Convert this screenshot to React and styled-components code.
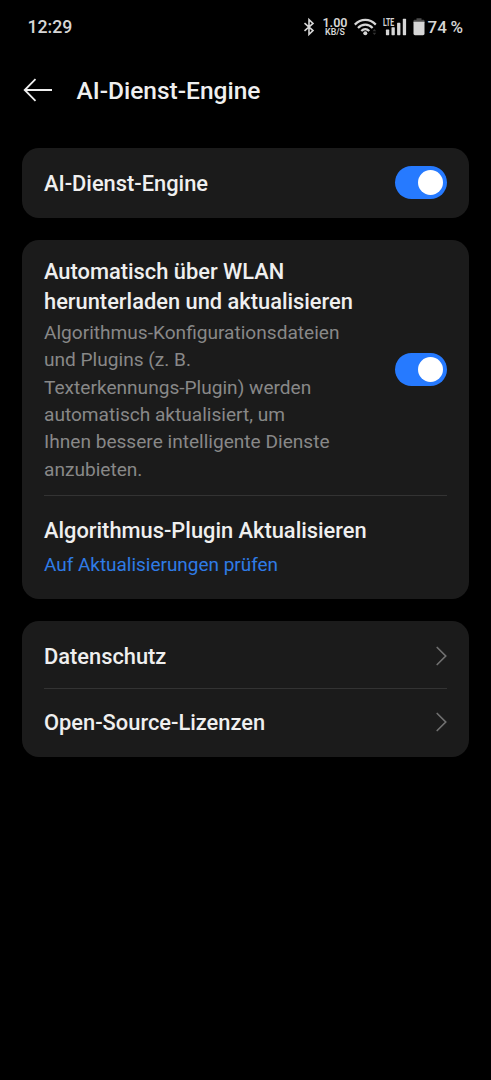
import React, { useState } from "react";
import styled, { createGlobalStyle } from "styled-components";

const GlobalStyle = createGlobalStyle`
  * {
    box-sizing: border-box;
  }

  body {
    margin: 0;
    background-color: #000;
    color: #efefef;
    font-family: Roboto, sans-serif;
  }
`;

const Screen = styled.div`
  min-height: 1080px;
  background-color: #000;
`;

const StatusBar = styled.div`
  display: flex;
  align-items: center;
  justify-content: space-between;
  height: 54px;
  padding: 0 28px 0 27.5px;
  color: #d6d6d6;
`;

const Clock = styled.span`
  font-size: 17.7px;
  font-weight: 500;
  line-height: 20px;
`;

const BatteryLevel = styled.span`
  width: 35.5px;
  font-size: 17px;
  font-weight: 500;
  line-height: 20px;
  word-spacing: -0.6px;
  white-space: nowrap;
`;

const StatusIcons = styled.div`
  display: flex;
  align-items: center;

  svg {
    display: block;
    flex: none;
    overflow: visible;
  }
`;

const Speed = styled.div`
  display: flex;
  flex-direction: column;
  align-items: center;
  width: 26px;
  font-size: 12.6px;
  font-weight: 600;
  line-height: 10px;
`;

const SpeedUnit = styled.span`
  font-size: 8.8px;
  line-height: 8px;
`;

const IconSlot = styled.span`
  margin-right: ${(props) => props.$gap};
`;

const Header = styled.header`
  display: flex;
  align-items: center;
  gap: 23.5px;
  height: 72px;
  padding-left: 23px;
`;

const BackButton = styled.button`
  display: flex;
  padding: 0;
  border: 0;
  background: none;
  color: #efefef;
`;

const Title = styled.h1`
  margin: 0;
  padding-top: 2px;
  font-size: 24.5px;
  font-weight: 500;
  line-height: 32px;
`;

const Content = styled.main`
  display: flex;
  flex-direction: column;
  gap: 22px;
  padding: 21.5px 22px 0;
`;

const Card = styled.section`
  padding: 0 22px;
  border-radius: 17px;
  background-color: #1b1b1b;
`;

const Row = styled.div`
  display: flex;
  align-items: center;
  justify-content: space-between;
  height: ${(props) => props.$height};
  padding: ${(props) => props.$padding || "0"};
  border-top: ${(props) => (props.$divided ? "1px solid #333" : "0")};
`;

const Label = styled.div`
  padding-top: 2px;
  font-size: 21.85px;
  font-weight: 500;
  line-height: 30px;
  white-space: pre-line;
`;

const Description = styled.p`
  margin: 2px 0 0;
  color: #888;
  font-size: 19.1px;
  line-height: 27.3px;
  white-space: pre-line;
`;

const Link = styled.div`
  margin-top: 5px;
  color: #2f7be6;
  font-size: 18.95px;
  line-height: 27px;
`;

const Track = styled.button`
  display: flex;
  flex: none;
  align-items: center;
  justify-content: ${(props) => (props.$on ? "flex-end" : "flex-start")};
  width: 52px;
  height: 33px;
  padding: 0 4px;
  border: 0;
  border-radius: 17px;
  background-color: ${(props) => (props.$on ? "#267aff" : "#444")};
`;

const Thumb = styled.span`
  width: 25px;
  height: 25px;
  border-radius: 50%;
  background-color: #fff;
`;

const Toggle = ({ label }) => {
  const [on, setOn] = useState(true);
  return (
    <Track
      role="switch"
      aria-label={label}
      aria-checked={on}
      $on={on}
      onClick={() => setOn(!on)}
    >
      <Thumb />
    </Track>
  );
};

const BluetoothIcon = () => (
  <svg width="12" height="18" viewBox="0 0 12 18" fill="none">
    <path
      d="M1.5 5.2L10 12.6L6 16.4V1.6L10 5.4L1.5 12.8"
      stroke="#d6d6d6"
      strokeWidth="1.6"
    />
  </svg>
);

const WifiIcon = () => (
  <svg width="24" height="18" viewBox="0 0 24 18" fill="none">
    <g stroke="#d6d6d6" strokeWidth="2.2">
      <path d="M0.8 6.6C7 0.4 15.6 0.4 21.8 6.6" />
      <path d="M4 9.9C8.2 5.6 14.4 5.6 18.6 9.9" />
      <path d="M7.3 13C9.8 10.5 12.8 10.5 15.3 13" />
    </g>
    <circle cx="11.3" cy="15.3" r="2" fill="#d6d6d6" />
    <path d="M18.6 13.2L20.4 11L22.2 13.2ZM18.6 14.8L20.4 17L22.2 14.8Z" fill="#333" />
  </svg>
);

const SignalIcon = () => (
  <svg width="24" height="18" viewBox="0 0 24 18">
    <text
      x="0"
      y="7.8"
      fill="#d6d6d6"
      fontSize="10.4"
      fontWeight="700"
      textLength="11.2"
      lengthAdjust="spacingAndGlyphs"
    >
      LTE
    </text>
    <g fill="#d6d6d6">
      <rect x="2.9" y="11.6" width="3.3" height="5.6" rx="0.6" />
      <rect x="8.5" y="9.2" width="3.3" height="8" rx="0.6" />
      <rect x="14.1" y="4.8" width="3.3" height="12.4" rx="0.6" />
      <rect x="19.8" y="0.8" width="3.3" height="16.4" rx="0.6" />
    </g>
  </svg>
);

const BatteryIcon = () => (
  <svg width="12" height="18" viewBox="0 0 12 18">
    <path d="M3.5 0.2H8.5V1.7H10.5Q11.5 1.7 11.5 3V5H0.5V3Q0.5 1.7 1.5 1.7H3.5Z" fill="#4c4c4c" />
    <path d="M0.5 3.7H11.5V15.8Q11.5 17.2 10 17.2H2Q0.5 17.2 0.5 15.8Z" fill="#d6d6d6" />
  </svg>
);

const BackIcon = () => (
  <svg width="30" height="24" viewBox="0 0 30 24" fill="none">
    <path
      d="M12.5 1.2L1.7 12L12.5 22.8M1.7 12H29"
      stroke="currentColor"
      strokeWidth="1.8"
    />
  </svg>
);

const Chevron = () => (
  <svg width="12" height="20" viewBox="0 0 12 20" fill="none">
    <path
      d="M2.2 1.5L10.7 10L2.2 18.5"
      stroke="#707070"
      strokeWidth="1.7"
      strokeLinecap="round"
    />
  </svg>
);

const App = () => {
  return (
    <Screen>
      <GlobalStyle />
      <StatusBar>
        <Clock>12:29</Clock>
        <StatusIcons>
          <IconSlot $gap="7px">
            <BluetoothIcon />
          </IconSlot>
          <IconSlot $gap="5.5px">
            <Speed>
              <span>1.00</span>
              <SpeedUnit>KB/S</SpeedUnit>
            </Speed>
          </IconSlot>
          <IconSlot $gap="5.5px">
            <WifiIcon />
          </IconSlot>
          <IconSlot $gap="6px">
            <SignalIcon />
          </IconSlot>
          <IconSlot $gap="2.5px">
            <BatteryIcon />
          </IconSlot>
          <BatteryLevel>74 %</BatteryLevel>
        </StatusIcons>
      </StatusBar>
      <Header>
        <BackButton aria-label="Zurück">
          <BackIcon />
        </BackButton>
        <Title>AI-Dienst-Engine</Title>
      </Header>
      <Content>
        <Card>
          <Row $height="70.5px">
            <Label>AI-Dienst-Engine</Label>
            <Toggle label="AI-Dienst-Engine" />
          </Row>
        </Card>
        <Card>
          <Row $height="255px" $padding="3px 0 0">
            <div>
              <Label>
                {"Automatisch über WLAN\nherunterladen und aktualisieren"}
              </Label>
              <Description>
                {
                  "Algorithmus-Konfigurationsdateien\nund Plugins (z. B.\nTexterkennungs-Plugin) werden\nautomatisch aktualisiert, um\nIhnen bessere intelligente Dienste\nanzubieten."
                }
              </Description>
            </div>
            <Toggle label="Automatisch über WLAN" />
          </Row>
          <Row $height="103.5px" $padding="0 0 3px" $divided>
            <div>
              <Label>Algorithmus-Plugin Aktualisieren</Label>
              <Link>Auf Aktualisierungen prüfen</Link>
            </div>
          </Row>
        </Card>
        <Card>
          <Row $height="67.5px" $padding="3px 0 0">
            <Label>Datenschutz</Label>
            <Chevron />
          </Row>
          <Row $height="68.5px" $padding="0 0 2px" $divided>
            <Label>Open-Source-Lizenzen</Label>
            <Chevron />
          </Row>
        </Card>
      </Content>
    </Screen>
  );
};

export default App;
